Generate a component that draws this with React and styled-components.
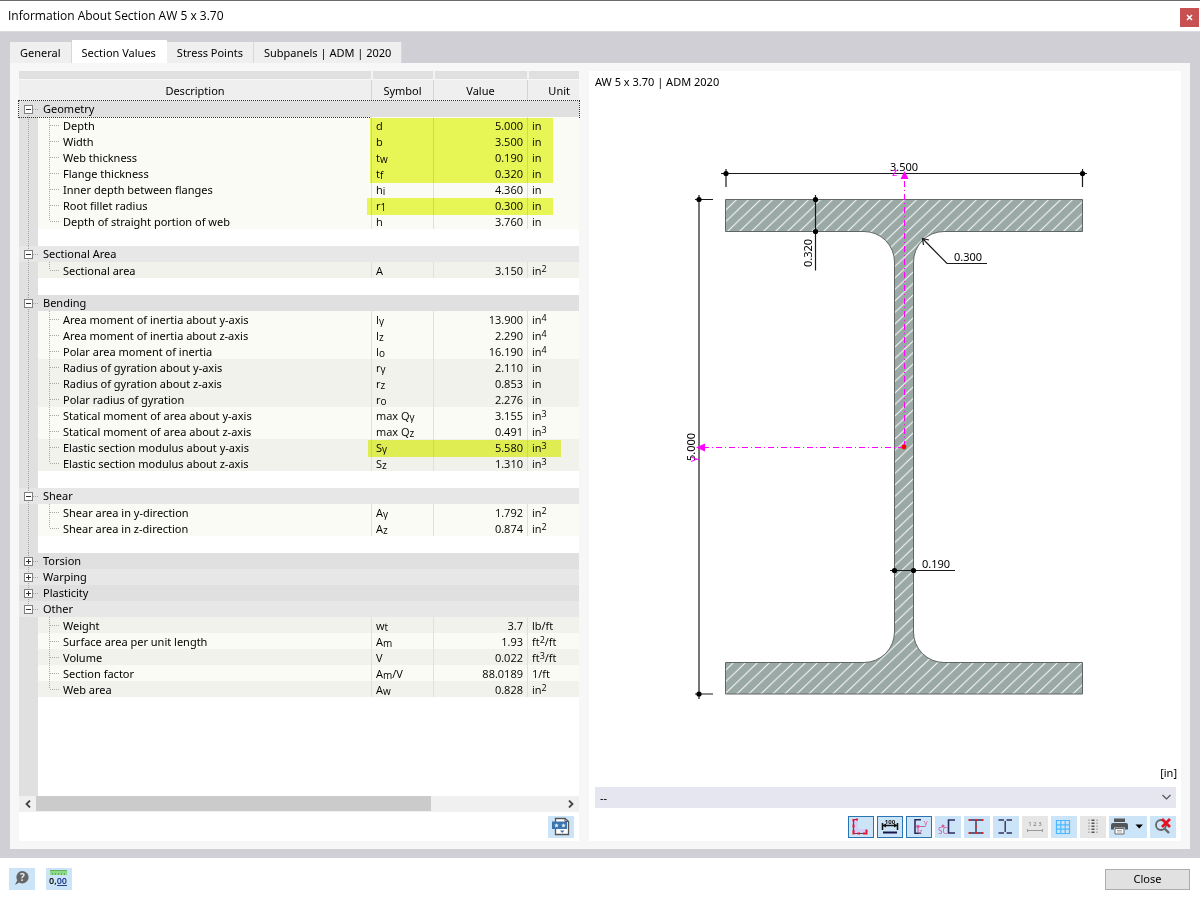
import React, { useState } from 'react';
import styled, { createGlobalStyle, css } from 'styled-components';

const COLORS = {
  frame: '#d0cfd5',
  panel: '#f7f7f7',
  gutter: '#e0e0e0',
  groupAlt: '#e7e7e7',
  rowLight: '#fafbf5',
  rowDark: '#f1f2ec',
  line: '#e0e0e0',
  tree: '#a8a8a8',
  marker: '#ecfa58',
  iconBg: '#cce4f7',
  iconBorder: '#2a74b5',
  axis: '#ff00ff',
  steel: '#9aa8a6',
  text: '#000000',
};

const GlobalStyle = createGlobalStyle`
  * { box-sizing: border-box; }
  body {
    margin: 0;
    background: #fff;
    color: ${COLORS.text};
    font-family: 'Noto Sans', 'Open Sans', sans-serif;
    font-size: 11px;
    line-height: 16px;
  }
  button, select { font: inherit; color: inherit; }
`;

const dotsY = `repeating-linear-gradient(180deg, ${COLORS.tree} 0 1px, transparent 1px 2px)`;
const dotsX = `repeating-linear-gradient(90deg, ${COLORS.tree} 0 1px, transparent 1px 2px)`;

const Dialog = styled.div`
  display: flex;
  flex-direction: column;
  min-height: 100vh;
`;

const TitleBar = styled.header`
  display: flex;
  align-items: center;
  justify-content: space-between;
  height: 32px;
  padding: 0 1px 0 8px;
  border-top: 1px solid #6a6a6a;
  border-bottom: 1px solid #dcdcdf;
`;

const Title = styled.h1`
  margin: 0;
  font-family: 'Open Sans', 'Noto Sans', sans-serif;
  font-size: 12px;
  font-weight: 400;
`;

const CloseIcon = styled.button`
  display: flex;
  align-items: center;
  justify-content: center;
  width: 19px;
  height: 19px;
  margin-top: 3px;
  padding: 0;
  border: 0;
  background: #c75050;
`;

const Body = styled.main`
  display: flex;
  flex: 1;
  flex-direction: column;
  padding: 8px 10px 9px;
  background: ${COLORS.frame};
`;

const Tabs = styled.div`
  display: flex;
  align-items: flex-end;
`;

const Tab = styled.button`
  height: ${props => (props.$active ? 23 : 21)}px;
  padding: ${props => (props.$active ? 2 : 0)}px 10px 0;
  border: 0;
  border-right: 1px solid ${props => (props.$active ? '#fff' : '#d8d8da')};
  background: ${props => (props.$active ? '#fff' : '#efefef')};
  white-space: nowrap;
`;

const Content = styled.div`
  display: flex;
  flex: 1;
  gap: 10px;
  padding: 8px 9px;
  background: ${COLORS.panel};
`;

const ValuesPane = styled.section`
  display: flex;
  flex: 0 0 560px;
  flex-direction: column;
  background: #fff;
`;

const TableArea = styled.div`
  flex: 1;
  background: linear-gradient(90deg, ${COLORS.gutter} 19px, #fff 19px);
`;

const Table = styled.table`
  width: 100%;
  table-layout: fixed;
  border-collapse: separate;
  border-spacing: 0;
`;

const StripCell = styled.th`
  height: 9px;
  padding: 0;
  background: ${COLORS.gutter};
  border-bottom: 1px solid #f7f7f7;
  border-left: ${props => (props.$first ? 0 : 2)}px solid #f3f3f3;
`;

const HeadCell = styled.th`
  height: 21px;
  padding: 0;
  background: #efefef;
  border-left: ${props => (props.$first ? 0 : 1)}px solid #d4d4d4;
  font-weight: 400;
  text-align: ${props => (props.$end ? 'right' : 'center')};
  padding-right: ${props => (props.$end ? 9 : 0)}px;
`;

const GroupCell = styled.td`
  height: 16px;
  padding: 0;
  background: ${dotsY} 9px ${props => (props.$edge === 'first' ? 8 : 0)}px / 1px ${props => (props.$edge === 'last' ? '8px' : '100%')} no-repeat,
    ${props => (props.$alt ? COLORS.groupAlt : COLORS.gutter)};
  ${props =>
    props.$focused &&
    css`
      outline: 1px dotted #333;
    `}
`;

const GroupLabel = styled.div`
  display: flex;
  align-items: center;
  height: 16px;
  padding-left: 5px;
`;

const Toggle = styled.button`
  display: flex;
  width: 9px;
  height: 9px;
  padding: 0;
  border: 0;
  background: #fff;
`;

const Dash = styled.span`
  width: 6px;
  height: 1px;
  margin-right: 4px;
  background: ${dotsX};
`;

const Gutter = styled.td`
  height: ${props => (props.$spacer ? 17 : 16)}px;
  padding: 0;
  background: ${props => (props.$open ? 'none' : dotsY)} 9px 0 / 1px 100% no-repeat, ${COLORS.gutter};
`;

const DescCell = styled.td`
  height: 16px;
  padding: 2px 0 0 25px;
  line-height: 14px;
  background: ${dotsY} 11px 0 / 1px ${props => (props.$last ? '8px' : '100%')} no-repeat,
    ${dotsX} 12px 8px / 10px 1px no-repeat, ${props => props.$bg};
`;

const Cell = styled.td`
  position: relative;
  height: 16px;
  padding: ${props => (props.$num ? '2px 4px 0 0' : '2px 0 0 4px')};
  line-height: 14px;
  background: ${props => props.$bg};
  border-left: 1px solid ${COLORS.line};
  font-family: 'Open Sans', 'Noto Sans', sans-serif;
  text-align: ${props => (props.$num ? 'right' : 'left')};
  white-space: nowrap;
`;

const Sub = styled.sub`
  font-size: 10px;
  line-height: 0;
  vertical-align: -1px;
`;

const Sup = styled.sup`
  font-size: 9px;
  line-height: 0;
  vertical-align: 3px;
`;

// highlighter stroke over the symbol, value and unit columns
const Marker = styled.span`
  position: absolute;
  z-index: 1;
  top: 1px;
  left: -${props => props.$lead}px;
  width: ${props => props.$width}px;
  height: ${props => props.$rows * 16 + 1}px;
  background: ${COLORS.marker};
  mix-blend-mode: multiply;
  pointer-events: none;
`;

const ScrollBar = styled.div`
  display: flex;
  height: 16px;
  background: #f0f0f0;
`;

const ScrollArrow = styled.button`
  display: flex;
  align-items: center;
  justify-content: center;
  width: 17px;
  padding: 0;
  border: 0;
  background: #f0f0f0;
`;

const Track = styled.div`
  flex: 1;
`;

const Thumb = styled.div`
  width: 75%;
  height: 15px;
  background: #cbcbcb;
`;

const PaneFooter = styled.div`
  display: flex;
  justify-content: flex-end;
  height: 29px;
  padding: 4px 5px 3px;
`;

const IconButton = styled.button`
  display: flex;
  align-items: center;
  justify-content: center;
  width: ${props => (props.$wide ? 38 : 26)}px;
  height: 22px;
  padding: 0;
  border: ${props => (props.$pressed ? `1px solid ${COLORS.iconBorder}` : 0)};
  background: ${props => (props.$muted ? '#e6e6e6' : COLORS.iconBg)};
  svg { flex: none; display: block; }
`;

const DrawingPane = styled.section`
  display: flex;
  flex: 1;
  flex-direction: column;
  min-width: 0;
  background: #fff;
`;

const SectionName = styled.h2`
  height: 20px;
  margin: 0;
  padding: 3px 6px 0;
  font-size: 11px;
  font-weight: 400;
`;

const Drawing = styled.svg`
  display: block;
  flex: 1 1 0;
  width: 100%;
  min-height: 0;
  text {
    font-size: 11px;
    fill: ${COLORS.text};
  }
`;

const UnitNote = styled.div`
  height: 22px;
  padding: 0 4px;
  text-align: right;
`;

const Combo = styled.div`
  display: flex;
  align-items: center;
  height: 21px;
  margin: 0 5px 8px 6px;
  padding-right: 4px;
  background: #e6e6f1;
`;

const ComboSelect = styled.select`
  flex: 1;
  height: 21px;
  padding: 0 5px;
  border: 0;
  background: transparent;
  appearance: none;
`;

const Toolbar = styled.div`
  display: flex;
  justify-content: flex-end;
  gap: 3px;
  padding: 0 5px 3px;
`;

const Footer = styled.footer`
  display: flex;
  align-items: center;
  gap: 11px;
  height: 42px;
  padding: 0 10px 0 9px;
`;

const CloseButton = styled.button`
  width: 85px;
  height: 21px;
  margin-left: auto;
  padding: 0;
  border: 1px solid #adadad;
  background: #e1e1e1;
`;

const { rowLight: L, rowDark: D } = COLORS;

// symbol: [base, subscript, rest], unit: [base, exponent, rest]
const groups = [
  {
    name: 'Geometry',
    open: true,
    focused: true,
    gap: true,
    rows: [
      ['Depth', ['d'], '5.000', ['in'], L, { rows: 4, lead: 2, width: 183 }],
      ['Width', ['b'], '3.500', ['in'], L],
      ['Web thickness', ['t', 'w'], '0.190', ['in'], L],
      ['Flange thickness', ['t', 'f'], '0.320', ['in'], L],
      ['Inner depth between flanges', ['h', 'i'], '4.360', ['in'], L],
      ['Root fillet radius', ['r', '1'], '0.300', ['in'], L, { rows: 1, lead: 5, width: 186 }],
      ['Depth of straight portion of web', ['h'], '3.760', ['in'], L],
    ],
  },
  {
    name: 'Sectional Area',
    open: true,
    gap: true,
    rows: [['Sectional area', ['A'], '3.150', ['in', '2'], D]],
  },
  {
    name: 'Bending',
    open: true,
    gap: true,
    rows: [
      ['Area moment of inertia about y-axis', ['I', 'y'], '13.900', ['in', '4'], L],
      ['Area moment of inertia about z-axis', ['I', 'z'], '2.290', ['in', '4'], L],
      ['Polar area moment of inertia', ['I', 'o'], '16.190', ['in', '4'], L],
      ['Radius of gyration about y-axis', ['r', 'y'], '2.110', ['in'], D],
      ['Radius of gyration about z-axis', ['r', 'z'], '0.853', ['in'], D],
      ['Polar radius of gyration', ['r', 'o'], '2.276', ['in'], D],
      ['Statical moment of area about y-axis', ['max Q', 'y'], '3.155', ['in', '3'], L],
      ['Statical moment of area about z-axis', ['max Q', 'z'], '0.491', ['in', '3'], L],
      ['Elastic section modulus about y-axis', ['S', 'y'], '5.580', ['in', '3'], D, { rows: 1, lead: 4, width: 193 }],
      ['Elastic section modulus about z-axis', ['S', 'z'], '1.310', ['in', '3'], D],
    ],
  },
  {
    name: 'Shear',
    open: true,
    gap: true,
    rows: [
      ['Shear area in y-direction', ['A', 'y'], '1.792', ['in', '2'], L],
      ['Shear area in z-direction', ['A', 'z'], '0.874', ['in', '2'], L],
    ],
  },
  { name: 'Torsion', rows: [] },
  { name: 'Warping', rows: [] },
  { name: 'Plasticity', rows: [] },
  {
    name: 'Other',
    open: true,
    rows: [
      ['Weight', ['w', 't'], '3.7', ['lb/ft'], D],
      ['Surface area per unit length', ['A', 'm'], '1.93', ['ft', '2', '/ft'], L],
      ['Volume', ['V'], '0.022', ['ft', '3', '/ft'], D],
      ['Section factor', ['A', 'm', '/V'], '88.0189', ['1/ft'], L],
      ['Web area', ['A', 'w'], '0.828', ['in', '2'], D],
    ],
  },
];

const ValueRow = ({ row, last, open }) => {
  const [desc, sym, value, unit, bg, mark] = row;
  return (
    <tr>
      <Gutter $open={open} />
      <DescCell $bg={bg} $last={last}>{desc}</DescCell>
      <Cell $bg={bg}>
        {sym[0]}
        {sym[1] && <Sub>{sym[1]}</Sub>}
        {sym[2]}
        {mark && <Marker $rows={mark.rows} $lead={mark.lead} $width={mark.width} />}
      </Cell>
      <Cell $bg={bg} $num>{value}</Cell>
      <Cell $bg={bg}>
        {unit[0]}
        {unit[1] && <Sup>{unit[1]}</Sup>}
        {unit[2]}
      </Cell>
    </tr>
  );
};

const ValuesTable = () => {
  const [closed, setClosed] = useState(() => groups.filter(g => !g.open).map(g => g.name));

  const toggle = name =>
    setClosed(list => (list.includes(name) ? list.filter(n => n !== name) : [...list, name]));

  return (
    <Table>
      <colgroup>
        <col style={{ width: 19 }} />
        <col />
        <col style={{ width: 62 }} />
        <col style={{ width: 94 }} />
        <col style={{ width: 52 }} />
      </colgroup>
      <thead>
        <tr>
          <StripCell colSpan={2} $first />
          <StripCell />
          <StripCell />
          <StripCell />
        </tr>
        <tr>
          <HeadCell colSpan={2} $first>Description</HeadCell>
          <HeadCell>Symbol</HeadCell>
          <HeadCell>Value</HeadCell>
          <HeadCell $end>Unit</HeadCell>
        </tr>
      </thead>
      <tbody>
        {groups.map((group, g) => {
          const open = !closed.includes(group.name);
          const lastGroup = g === groups.length - 1;
          return (
            <React.Fragment key={group.name}>
              <tr>
                <GroupCell
                  colSpan={5}
                  $alt={g % 2 === 1}
                  $focused={group.focused}
                  $edge={g === 0 ? 'first' : lastGroup ? 'last' : ''}
                >
                  <GroupLabel>
                    <Toggle aria-label={`Toggle ${group.name}`} aria-expanded={open} onClick={() => toggle(group.name)}>
                      <svg width="9" height="9" viewBox="0 0 9 9" fill="none" stroke="#808080">
                        <rect x="0.5" y="0.5" width="8" height="8" />
                        <path d={open ? 'M2 4.5h5' : 'M2 4.5h5M4.5 2v5'} stroke="#333" />
                      </svg>
                    </Toggle>
                    <Dash />
                    {group.name}
                  </GroupLabel>
                </GroupCell>
              </tr>
              {open &&
                group.rows.map((row, i) => (
                  <ValueRow key={row[0]} row={row} last={i === group.rows.length - 1} open={lastGroup} />
                ))}
              {open && group.gap && (
                <tr>
                  <Gutter $spacer />
                  <td colSpan={4} />
                </tr>
              )}
            </React.Fragment>
          );
        })}
      </tbody>
    </Table>
  );
};

const SectionDrawing = () => (
  <Drawing viewBox="0 0 592 674" role="img" aria-label="Cross-section with dimensions">
    <defs>
      <pattern id="hatch" width="12" height="11.5" patternUnits="userSpaceOnUse" patternTransform="translate(9 0)">
        <rect width="12" height="11.5" fill={COLORS.steel} />
        <path d="M-3 14.375L15 -2.875M-3 2.875L3 -2.875M9 14.375L15 8.625" stroke="#f1f4f3" strokeWidth="1.2" />
      </pattern>
    </defs>
    <path
      d="M136.5 108.5H493.5V140.5H355A30.5 30.5 0 0 0 324.5 171V541A30.5 30.5 0 0 0 355 571.5H493.5V603H136.5V571.5H275A30.5 30.5 0 0 0 305.5 541V171A30.5 30.5 0 0 0 275 140.5H136.5Z"
      fill="url(#hatch)"
      stroke="#5f6664"
    />
    <g stroke="#1a1a1a" strokeWidth="1.2" fill="none">
      <path d="M132 82.5H498M137 78V96M493.5 78V96" />
      <path d="M110 104V608M106 108.5H124M106 603H124" />
      <path d="M226.5 104V179.5" />
      <path d="M301 479.5H366" />
      <path d="M333.5 147.5L358 172.5H398M340 149L333.5 147.5L334.5 154" />
    </g>
    <g fill="#000">
      <circle cx="137" cy="82.5" r="2.6" />
      <circle cx="493.5" cy="82.5" r="2.6" />
      <circle cx="110" cy="108.5" r="2.6" />
      <circle cx="110" cy="603" r="2.6" />
      <circle cx="226.5" cy="108.5" r="2.6" />
      <circle cx="226.5" cy="140.5" r="2.6" />
      <circle cx="305.5" cy="479.5" r="2.6" />
      <circle cx="324.5" cy="479.5" r="2.6" />
    </g>
    <text x="315" y="80" textAnchor="middle">3.500</text>
    <text x="379" y="170" textAnchor="middle">0.300</text>
    <text x="347" y="477" textAnchor="middle">0.190</text>
    <text transform="translate(223 162) rotate(-90)" textAnchor="middle">0.320</text>
    <text transform="translate(106 356) rotate(-90)" textAnchor="middle">5.000</text>
    <g stroke={COLORS.axis} strokeDasharray="6 3 1 3" fill="none">
      <path d="M315.5 356V88" />
      <path d="M315 356.5H116" />
    </g>
    <g fill={COLORS.axis}>
      <path d="M315.5 80L319.5 88H311.5Z" />
      <path d="M107 356.5L116 352.5V360.5Z" />
    </g>
    <text x="303" y="85" style={{ fill: COLORS.axis }}>z</text>
    <text transform="translate(108 371) rotate(-90)" style={{ fill: COLORS.axis }}>y</text>
    <circle cx="315" cy="356" r="2.4" fill="#ff0000" />
  </Drawing>
);

const AngleIcon = () => (
  <svg width="24" height="20" viewBox="0 0 24 20" fill="none">
    <path d="M4.5 2.5H9V10Q9 12 11 12H17V16.5H4.5Z" fill="#d3cdf7" />
    <path d="M8 2.5H4.5V16.5H17.5V13" stroke="#6b3a55" strokeWidth="1.2" />
    <path d="M7 2.5H9M4.5 2V4.5M4.5 7.5V10.5M4.5 13V17.5M8.5 16.5H11M14 16.5H18.5M17.5 12.5V15" stroke="#ee1530" strokeWidth="2" />
  </svg>
);

const DimensionIcon = () => (
  <svg width="24" height="20" viewBox="0 0 24 20" fill="none">
    <text x="12" y="7" textAnchor="middle" fontSize="6" fontWeight="700" fill="#111">100</text>
    <path d="M4.5 6V13M19.5 6V13M5 8.5H19" stroke="#111" strokeWidth="1.5" />
    <path d="M4.5 8.5L8 6.5V10.5ZM19.5 8.5L16 6.5V10.5Z" fill="#111" />
    <path d="M5 15.5H19" stroke="#17174d" strokeWidth="2" />
  </svg>
);

const AxesIcon = () => (
  <svg width="24" height="20" viewBox="0 0 24 20" fill="none">
    <path d="M14 2.8H8V16.2H14" stroke="#2c2c5c" strokeWidth="1.6" />
    <path d="M11 9.5H18M11 9V15" stroke="#d15d9c" strokeWidth="1.1" />
    <circle cx="11" cy="9.5" r="1.8" fill="#d15d9c" />
    <text x="17" y="8" fontSize="7" fill="#d15d9c">y</text>
    <text x="12" y="17" fontSize="7" fill="#d15d9c">z</text>
  </svg>
);

const ShearCentreIcon = () => (
  <svg width="26" height="22" viewBox="0 0 26 22" fill="none">
    <path d="M20 4H13.5V17H20" stroke="#2c2c5c" strokeWidth="1.6" />
    <circle cx="8" cy="10" r="1.6" fill="#d15d9c" />
    <text x="3" y="18" fontSize="8" fill="#d15d9c">SC</text>
  </svg>
);

const ProfileIcon = ({ stress }) => (
  <svg width="26" height="22" viewBox="0 0 26 22" fill="none">
    <path
      d={stress ? 'M5 4H19M5 17H19M12 4V17' : 'M5.5 4H11M13.5 4H19M5.5 17H11M13.5 17H19M12.2 5V16'}
      stroke="#33335f"
      strokeWidth="1.4"
    />
    {stress && (
      <path d="M4.5 4h2M11 4h2M17.5 4h2M4.5 17h2M11 17h2M17.5 17h2M11 10.5h2" stroke="#e52626" strokeWidth="2" />
    )}
  </svg>
);

const NumbersIcon = () => (
  <svg width="26" height="22" viewBox="0 0 26 22" fill="none">
    <text x="13" y="10" textAnchor="middle" fontSize="6" fill="#777">1 2 3</text>
    <path d="M5 14.5H21M5.5 13V16M20.5 13V16" stroke="#9a9a9a" />
  </svg>
);

const GridIcon = () => (
  <svg width="26" height="22" viewBox="0 0 26 22" fill="none" stroke="#4db8ff" strokeWidth="1.2">
    <path d="M5.5 4.5H18.5V17.5H5.5ZM5.5 8.8H18.5M5.5 13.2H18.5M9.8 4.5V17.5M14.2 4.5V17.5" />
  </svg>
);

const RulerIcon = () => (
  <svg width="26" height="22" viewBox="0 0 26 22" fill="none">
    <path d="M9 3.5V18.5M17 3.5V18.5" stroke="#aaa" strokeWidth="1.5" strokeDasharray="1.5 1.5" />
    <path d="M13 3.5V18.5" stroke="#555" strokeWidth="3" strokeDasharray="1.5 1.5" />
  </svg>
);

const PrinterIcon = () => (
  <svg width="38" height="22" viewBox="0 0 38 22" fill="none">
    <path d="M5 2.5H16V6H5Z" fill="#555" />
    <path d="M4 7H17Q19 7 19 9V13.5H16V11.5H5V13.5H2V9Q2 7 4 7Z" fill="#555" />
    <path d="M6 12.5H15V18H6Z" fill="#fff" stroke="#666" />
    <path d="M8 14.5H13M8 16H13" stroke="#999" strokeWidth="0.8" />
    <path d="M26.5 8.5H34L30.2 12.5Z" fill="#000" />
  </svg>
);

const ZoomResetIcon = () => (
  <svg width="26" height="22" viewBox="0 0 26 22" fill="none">
    <circle cx="11" cy="9" r="5" stroke="#666" strokeWidth="1.8" />
    <path d="M14.5 12.5L19 17" stroke="#666" strokeWidth="2.4" />
    <path d="M12 3L20 11M20 3L12 11" stroke="#e81123" strokeWidth="2.8" />
  </svg>
);

const ReportIcon = () => (
  <svg width="26" height="22" viewBox="0 0 26 22" fill="none">
    <path d="M7.5 6V2.5H17L20.5 5.5V18.5H7.5V13" fill="#fff" stroke="#555" strokeWidth="1.3" />
    <path d="M17 2.5V5.5H20.5" stroke="#555" />
    <path d="M4 5.5H19V13H4Z" fill="#3b73af" />
    <path d="M8.5 7.2L9.2 8.6L10.7 8.8L9.6 9.9L9.9 11.4L8.5 10.7L7.1 11.4L7.4 9.9L6.3 8.8L7.8 8.6ZM15.5 7.2L16.2 8.6L17.7 8.8L16.6 9.9L16.9 11.4L15.5 10.7L14.1 11.4L14.4 9.9L13.3 8.8L14.8 8.6Z" fill="#d5e8f8" />
    <path d="M12 14.5H16.5L14.2 17Z" fill="#3b73af" />
  </svg>
);

const HelpIcon = () => (
  <svg width="26" height="22" viewBox="0 0 26 22" fill="none">
    <path d="M13.5 3A6.2 6.2 0 1 1 10.2 14.5L6 17L8.2 12.3A6.2 6.2 0 0 1 13.5 3Z" fill="#666" />
    <text x="13.5" y="13" textAnchor="middle" fontSize="10" fontWeight="700" fill="#e2effa">?</text>
  </svg>
);

const DecimalsIcon = () => (
  <svg width="26" height="22" viewBox="0 0 26 22" fill="none">
    <path d="M4 2H21V7H4Z" fill="#8fd98a" />
    <path d="M4 2.5H21M6.5 5V7M9.5 5V7M12.5 5V7M15.5 5V7M18.5 5V7" stroke="#5aa555" strokeWidth="0.8" />
    <text x="3" y="16" fontSize="9" fontWeight="600" fill="#111">0,<tspan fill="#25408f">00</tspan></text>
    <path d="M11 17.5H21" stroke="#25408f" />
  </svg>
);

const tabs = ['General', 'Section Values', 'Stress Points', 'Subpanels | ADM | 2020'];

const App = () => {
  const [tab, setTab] = useState('Section Values');

  return (
    <Dialog>
      <GlobalStyle />
      <TitleBar>
        <Title>Information About Section AW 5 x 3.70</Title>
        <CloseIcon aria-label="Close window">
          <svg width="7" height="7" viewBox="0 0 7 7" stroke="#fff" strokeWidth="1.5">
            <path d="M1 1L6 6M6 1L1 6" />
          </svg>
        </CloseIcon>
      </TitleBar>

      <Body>
        <Tabs role="tablist">
          {tabs.map(name => (
            <Tab key={name} role="tab" aria-selected={tab === name} $active={tab === name} onClick={() => setTab(name)}>
              {name}
            </Tab>
          ))}
        </Tabs>
        <Content>
          <ValuesPane>
            <TableArea>
              <ValuesTable />
            </TableArea>
            <ScrollBar>
              <ScrollArrow aria-label="Scroll left">
                <svg width="6" height="8" viewBox="0 0 6 8" fill="none" stroke="#444" strokeWidth="1.8">
                  <path d="M5 0.5L1.5 4L5 7.5" />
                </svg>
              </ScrollArrow>
              <Track>
                <Thumb />
              </Track>
              <ScrollArrow aria-label="Scroll right">
                <svg width="6" height="8" viewBox="0 0 6 8" fill="none" stroke="#444" strokeWidth="1.8">
                  <path d="M1 0.5L4.5 4L1 7.5" />
                </svg>
              </ScrollArrow>
            </ScrollBar>
            <PaneFooter>
              <IconButton aria-label="Create report"><ReportIcon /></IconButton>
            </PaneFooter>
          </ValuesPane>

          <DrawingPane>
            <SectionName>AW 5 x 3.70 | ADM 2020</SectionName>
            <SectionDrawing />
            <UnitNote>[in]</UnitNote>
            <Combo>
              <ComboSelect aria-label="Stress display">
                <option>--</option>
              </ComboSelect>
              <svg width="11" height="7" viewBox="0 0 11 7" fill="none" stroke="#555" strokeWidth="1.2">
                <path d="M1.5 1L5.5 5L9.5 1" />
              </svg>
            </Combo>
            <Toolbar>
              <IconButton $pressed aria-label="Fill"><AngleIcon /></IconButton>
              <IconButton $pressed aria-label="Dimensions"><DimensionIcon /></IconButton>
              <IconButton $pressed aria-label="Axes"><AxesIcon /></IconButton>
              <IconButton aria-label="Shear centre"><ShearCentreIcon /></IconButton>
              <IconButton aria-label="Stress points"><ProfileIcon stress /></IconButton>
              <IconButton aria-label="Section parts"><ProfileIcon /></IconButton>
              <IconButton $muted aria-label="Numbering"><NumbersIcon /></IconButton>
              <IconButton aria-label="Grid"><GridIcon /></IconButton>
              <IconButton $muted aria-label="Values"><RulerIcon /></IconButton>
              <IconButton $wide aria-label="Print"><PrinterIcon /></IconButton>
              <IconButton aria-label="Reset view"><ZoomResetIcon /></IconButton>
            </Toolbar>
          </DrawingPane>
        </Content>
      </Body>

      <Footer>
        <IconButton aria-label="Help"><HelpIcon /></IconButton>
        <IconButton aria-label="Units and decimals"><DecimalsIcon /></IconButton>
        <CloseButton>Close</CloseButton>
      </Footer>
    </Dialog>
  );
};

export default App;
